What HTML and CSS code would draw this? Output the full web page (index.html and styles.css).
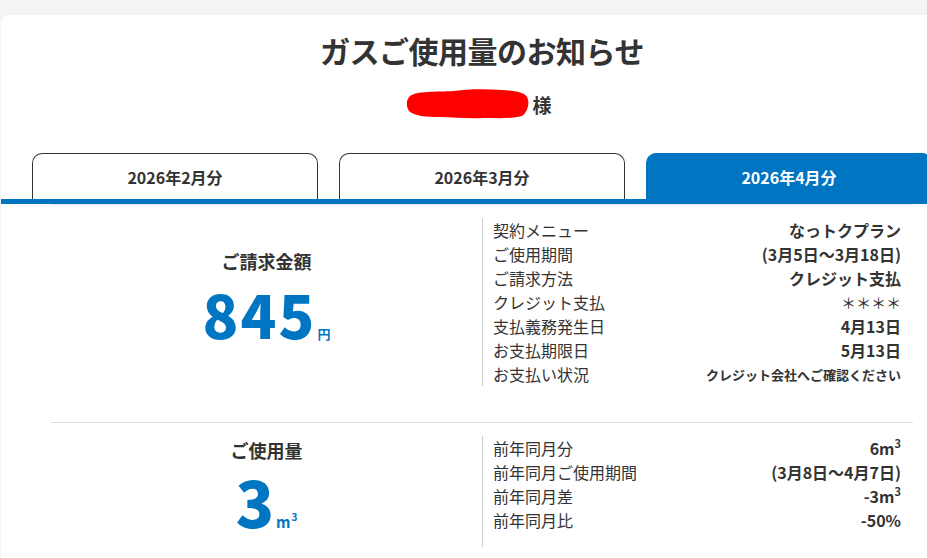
FILE: index.html
```html
<!DOCTYPE html>
<html lang="ja">
<head>
<meta charset="utf-8">
<title>ガスご使用量のお知らせ</title>
<link rel="stylesheet" href="styles.css">
</head>
<body>
<div class="card">
  <h1 class="title">ガスご使用量のお知らせ</h1>
  <div class="name-row">
    <svg class="redact" width="124" height="32" viewBox="0 0 124 32" aria-hidden="true">
      <path d="M4 8 C10 3 30 4 48 3 C62 1 80 1 96 2 C108 3 118 4 121 9 C124 14 122 24 116 28 C104 31 90 30 78 30 C62 31 48 29 34 29 C20 29 8 28 3 23 C0 18 0 12 4 8 Z" fill="#ff0000"/>
    </svg>
    <span class="sama">様</span>
  </div>
  <div class="tabs">
    <div class="tab">2026年2月分</div>
    <div class="tab">2026年3月分</div>
    <div class="tab tab-active">2026年4月分</div>
  </div>
  <div class="tab-bar"></div>

  <section class="block block-first">
    <div class="summary summary-bill">
      <div class="summary-label">ご請求金額</div>
      <div class="summary-value"><span class="big big-bill">845</span><span class="unit">円</span></div>
    </div>
    <div class="details">
      <div class="row"><span class="key">契約メニュー</span><span class="val">なっトクプラン</span></div>
      <div class="row"><span class="key">ご使用期間</span><span class="val">(3月5日～3月18日)</span></div>
      <div class="row"><span class="key">ご請求方法</span><span class="val">クレジット支払</span></div>
      <div class="row"><span class="key">クレジット支払</span><span class="val val-plain">＊＊＊＊</span></div>
      <div class="row"><span class="key">支払義務発生日</span><span class="val">4月13日</span></div>
      <div class="row"><span class="key">お支払期限日</span><span class="val">5月13日</span></div>
      <div class="row"><span class="key">お支払い状況</span><span class="val val-small">クレジット会社へご確認ください</span></div>
    </div>
  </section>

  <section class="block block-second">
    <div class="summary summary-use">
      <div class="summary-label">ご使用量</div>
      <div class="summary-value"><span class="big big-use">3</span><span class="unit unit-m">m<sup class="sup-unit">3</sup></span></div>
    </div>
    <div class="details details-short">
      <div class="row"><span class="key">前年同月分</span><span class="val">6m<sup>3</sup></span></div>
      <div class="row"><span class="key">前年同月ご使用期間</span><span class="val">(3月8日～4月7日)</span></div>
      <div class="row"><span class="key">前年同月差</span><span class="val">-3m<sup>3</sup></span></div>
      <div class="row"><span class="key">前年同月比</span><span class="val">-50%</span></div>
    </div>
  </section>
</div>
</body>
</html>
```

FILE: styles.css
```css
html, body {
  margin: 0;
  padding: 0;
  overflow: hidden;
}
body {
  background: #f4f4f4;
  font-family: "Noto Sans CJK JP", "Noto Sans", sans-serif;
  color: #333;
  width: 927px;
  height: 558px;
}
.card {
  margin: 15px 0 0 1px;
  width: 962px;
  height: 560px;
  background: #fff;
  border-radius: 8px 8px 0 0;
}
.title {
  margin: 0;
  padding-top: 15px;
  font-size: 30px;
  line-height: 40px;
  font-weight: 700;
  text-align: center;
  letter-spacing: -0.5px;
  color: #333;
}
.name-row {
  margin-top: 20px;
  height: 30px;
  display: flex;
  justify-content: center;
  align-items: center;
  gap: 2px;
  padding-right: 6px;
}
.redact {
  display: block;
  margin-top: -2px;
}
.sama {
  font-size: 19px;
  font-weight: 700;
  line-height: 30px;
  color: #333;
}
.tabs {
  margin-top: 33px;
  padding: 0 31px;
  display: flex;
  gap: 21px;
}
.tab {
  flex: 1;
  height: 44px;
  border: 1px solid #333;
  border-bottom: none;
  border-radius: 10px 10px 0 0;
  display: flex;
  align-items: center;
  justify-content: center;
  font-size: 16px;
  font-weight: 700;
  color: #333;
  padding-top: 1px;
}
.tab-active {
  background: #0075c2;
  border-color: #0075c2;
  color: #fff;
}
.tab-bar {
  height: 5px;
  background: #0075c2;
}
.block {
  margin: 0 50px;
  display: grid;
  grid-template-columns: 1fr 1fr;
}
.block-first {
  border-top: 1px solid #e6e6e6;
  border-bottom: 1px solid #dddddd;
  padding: 13px 0 36px;
}
.block-second {
  padding: 13px 0 0;
}
.summary {
  display: flex;
  flex-direction: column;
  align-items: center;
}
.summary-bill {
  padding-top: 34px;
}
.summary-use {
  padding-top: 5px;
}
.summary-label {
  font-size: 18px;
  line-height: 18px;
  font-weight: 700;
  color: #333;
}
.summary-value {
  display: flex;
  align-items: baseline;
  color: #0075c2;
  font-weight: 700;
}
.summary-bill .summary-value {
  margin-top: 14px;
}
.summary-use .summary-value {
  margin-top: 14px;
}
.big {
  line-height: 1;
  font-family: "Noto Sans CJK JP", "Noto Sans", sans-serif;
  font-weight: 900;
}
.big-bill {
  font-size: 59px;
  letter-spacing: 2px;
}
.big-use {
  font-size: 63px;
  line-height: 0.9;
}
.unit {
  font-size: 13px;
  margin-left: 1px;
}
.unit-m {
  font-size: 15px;
  margin-left: 2px;
}
.sup-unit {
  font-size: 10px;
  line-height: 0;
  vertical-align: 7px;
  margin-left: 1px;
}
.details {
  border-left: 1px solid #cccccc;
  padding: 0 12px 0 10px;
}
.details-short {
  padding-bottom: 15px;
}
.row {
  display: flex;
  justify-content: space-between;
  align-items: center;
  height: 24px;
  font-size: 16px;
}
.key {
  font-weight: 400;
  color: #333;
}
.val {
  font-weight: 700;
  color: #333;
}
.val sup {
  font-size: 11px;
  line-height: 0;
  vertical-align: 7px;
}
.val-plain {
  font-weight: 400;
  font-size: 15px;
}
.val-small {
  font-size: 13px;
}
```
